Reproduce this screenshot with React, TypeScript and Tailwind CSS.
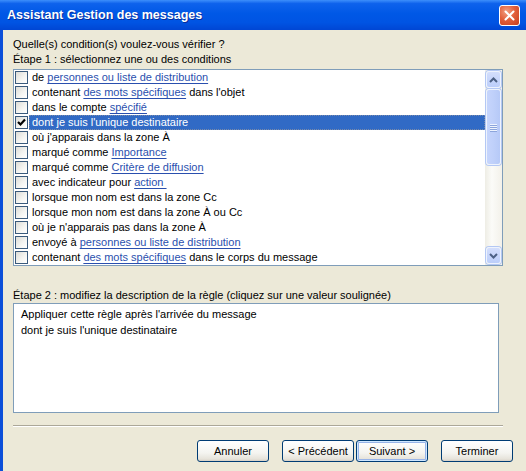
import React from 'react';

type Seg = [string, boolean?];

const ROWS: { segs: Seg[]; checked?: boolean }[] = [
  { segs: [['de '], ['personnes ou liste de distribution', true]] },
  { segs: [['contenant '], ['des mots spécifiques', true], [" dans l'objet"]] },
  { segs: [['dans le compte '], ['spécifié', true]] },
  { segs: [["dont je suis l'unique destinataire"]], checked: true },
  { segs: [["où j'apparais dans la zone À"]] },
  { segs: [['marqué comme '], ['Importance', true]] },
  { segs: [['marqué comme '], ['Critère de diffusion', true]] },
  { segs: [['avec indicateur pour '], ['action\u00a0', true]] },
  { segs: [['lorsque mon nom est dans la zone Cc']] },
  { segs: [['lorsque mon nom est dans la zone À ou Cc']] },
  { segs: [["où je n'apparais pas dans la zone À"]] },
  { segs: [['envoyé à '], ['personnes ou liste de distribution', true]] },
  { segs: [['contenant '], ['des mots spécifiques', true], [' dans le corps du message']] },
];

function Checkbox({ checked }: { checked?: boolean }) {
  return (
    <div className="w-[13px] h-[13px] shrink-0 border border-[#3a5a7c] bg-[linear-gradient(135deg,#dcdcd7_0%,#f5f5f2_60%,#ffffff_100%)] flex items-center justify-center">
      {checked && (
        <svg width="9" height="9" viewBox="0 0 9 9">
          <path d="M1 4 L3.5 6.5 L8 1.5" fill="none" stroke="#000" strokeWidth="2.2" />
        </svg>
      )}
    </div>
  );
}

function ScrollButton({ up }: { up?: boolean }) {
  return (
    <div className="h-[17px] rounded-[3px] border border-[#eef3fd] bg-[linear-gradient(to_bottom,#d3defc,#bccefa)] shadow-[0_0_0_1px_#b4c8f4] flex items-center justify-center">
      <svg width="9" height="6" viewBox="0 0 9 6">
        <path d={up ? 'M1 5 L4.5 1.5 L8 5' : 'M1 1 L4.5 4.5 L8 1'} fill="none" stroke="#4d6185" strokeWidth="2" />
      </svg>
    </div>
  );
}

function Btn({ label, def }: { label: string; def?: boolean }) {
  return (
    <div
      className={
        'w-[72px] h-[22px] rounded-[3px] border border-[#003c74] bg-[linear-gradient(to_bottom,#ffffff_0%,#f4f4f0_60%,#e6e3da_90%,#d6d0c5_100%)] flex items-center justify-center text-black ' +
        (def ? 'shadow-[inset_0_0_0_1px_#cee7ff,inset_0_0_0_2px_#98b4e8]' : '')
      }
    >
      {label}
    </div>
  );
}

export default function App() {
  return (
    <div className="w-[526px] h-[471px] flex flex-col overflow-hidden font-['Liberation_Sans',Arial,sans-serif] text-[11px] text-black">
      <div className="h-[30px] shrink-0 flex items-center justify-between pl-[7px] pr-[6px] bg-[linear-gradient(to_bottom,#3d8ffb_0%,#0e62ec_12%,#0058e6_45%,#0054e3_75%,#0046d4_100%)]">
        <span className="font-bold text-[12.5px] text-white [text-shadow:1px_1px_0_#0a2e9a]">Assistant Gestion des messages</span>
        <div className="w-[21px] h-[21px] rounded-[3px] border border-white bg-[radial-gradient(circle_at_35%_30%,#f1a083_0%,#e2603c_45%,#c83d1c_100%)] flex items-center justify-center">
          <svg width="11" height="11" viewBox="0 0 11 11">
            <path d="M1.5 1.5 L9.5 9.5 M9.5 1.5 L1.5 9.5" stroke="#fff" strokeWidth="2" strokeLinecap="round" />
          </svg>
        </div>
      </div>

      <div className="flex-1 flex flex-col bg-[#ece9d8] border-l-[3px] border-[#0b4fd9] pl-[10px] pt-[7px]">
        <div className="h-[15px] leading-[15px]">Quelle(s) condition(s) voulez-vous vérifier ?</div>
        <div className="h-[15px] leading-[15px]">Étape 1 : sélectionnez une ou des conditions</div>

        <div className="mt-[2px] w-[490px] h-[197px] border border-[#7f9db9] bg-white flex">
          <div className="flex-1 flex flex-col">
            {ROWS.map((r, i) => {
              const sel = !!r.checked;
              return (
                <div key={i} className="h-[15px] flex items-center">
                  <div className="ml-[1px]">
                    <Checkbox checked={r.checked} />
                  </div>
                  <div
                    className={
                      'ml-[1px] flex-1 h-full flex items-center pl-[2px] whitespace-pre border ' +
                      (sel ? 'bg-[#316ac5] text-white border-dotted border-[#7a8aa8]' : 'border-transparent')
                    }
                  >
                    {r.segs.map(([t, link], j) => (
                      <span key={j} className={link ? 'text-[#2a4fae] underline underline-offset-[2px] decoration-[#2a4fae]' : ''}>
                        {t}
                      </span>
                    ))}
                  </div>
                </div>
              );
            })}
          </div>
          <div className="w-[17px] shrink-0 flex flex-col bg-[linear-gradient(to_right,#eeede5,#fbfbf8_40%,#f3f1ea)] px-[1px] py-[1px]">
            <ScrollButton up />
            <div className="mt-[1px] h-[76px] rounded-[3px] border border-[#eef3fd] bg-[linear-gradient(to_right,#c6d5fc,#bfd0fa_50%,#b6c9f7)] shadow-[0_0_0_1px_#b4c8f4] flex flex-col items-center justify-center gap-[1px]">
              {[0, 1, 2, 3].map(k => (
                <div key={k} className="w-[7px] h-[1px] bg-[#eef4fe] shadow-[0_1px_0_#8ca5dc]" />
              ))}
            </div>
            <div className="flex-1" />
            <ScrollButton />
          </div>
        </div>

        <div className="mt-[22px] h-[15px] leading-[15px]">Étape 2 : modifiez la description de la règle (cliquez sur une valeur soulignée)</div>
        <div className="w-[486px] h-[110px] border border-[#7f9db9] bg-white pl-[7px] pt-[2px] leading-[16px]">
          <div>Appliquer cette règle après l'arrivée du message</div>
          <div>dont je suis l'unique destinataire</div>
        </div>

        <div className="mt-[12px] w-[490px] h-[2px] border-t border-[#aca899] border-b border-b-white" />

        <div className="mt-[13px] ml-[184px] flex">
          <Btn label="Annuler" />
          <div className="ml-[13px]">
            <Btn label="< Précédent" />
          </div>
          <div className="ml-[2px]">
            <Btn label="Suivant >" def />
          </div>
          <div className="ml-[13px]">
            <Btn label="Terminer" />
          </div>
        </div>
      </div>
    </div>
  );
}
